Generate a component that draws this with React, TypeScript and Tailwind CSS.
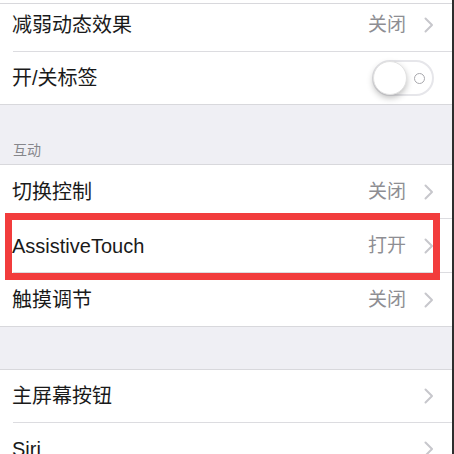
import React from "react";

const FONT = { fontFamily: '"Liberation Sans", "Noto Sans CJK SC", sans-serif' };

function Chevron() {
  return (
    <svg width="10" height="16" viewBox="0 0 10 16" className="shrink-0">
      <path d="M1.5 1.5 L8 8 L1.5 14.5" fill="none" stroke="#c7c7cc" strokeWidth="2" strokeLinecap="round" strokeLinejoin="round" />
    </svg>
  );
}

function Row({ label, value, h = "h-[53px]", extra = "" }: { label: string; value?: string; h?: string; extra?: string }) {
  return (
    <div className={`flex items-center bg-white pl-[12px] pr-[18px] ${h} ${extra}`}>
      <span className="flex-1 text-[20px] text-[#1a1a1a] leading-none">{label}</span>
      {value && <span className="text-[19px] text-[#8e8e93] leading-none mr-[18px]">{value}</span>}
      <Chevron />
    </div>
  );
}

function Sep() {
  return (
    <div className="bg-white h-px">
      <div className="ml-[13px] h-px bg-[#dcdce0]" />
    </div>
  );
}

function Line() {
  return <div className="h-px bg-[#d8d8dc]" />;
}

function Toggle() {
  return (
    <div className="relative w-[62px] h-[36px] rounded-full border-2 border-[#e6e6ea] bg-white">
      <div className="absolute left-[-1px] top-[-1px] w-[34px] h-[34px] rounded-full bg-white shadow-[0_3px_6px_rgba(0,0,0,0.25)] border border-[#e2e2e2]" />
      <div className="absolute right-[7px] top-[11px] w-[11px] h-[11px] rounded-full border-[1.5px] border-[#a8a8ad]" />
    </div>
  );
}

export default function App() {
  return (
    <div className="relative w-[454px] h-[454px] overflow-hidden bg-[#efeff4] border-r-2 border-[#2e2e2e]" style={FONT}>
      <div className="h-[3px] bg-white" />
      <Line />
      <Row label="减弱动态效果" value="关闭" h="h-[47px] pb-[6px]" />
      <Sep />
      <div className="flex items-center bg-white pl-[12px] pr-[18px] h-[52px]">
        <span className="flex-1 text-[20px] text-[#1a1a1a] leading-none">开/关标签</span>
        <Toggle />
      </div>
      <Line />
      <div className="h-[59px] flex items-end pl-[13px] pb-[4px]">
        <span className="text-[14px] leading-[20px] text-[#86868b]">互动</span>
      </div>
      <Line />
      <Row label="切换控制" value="关闭" />
      <Sep />
      <Row label="AssistiveTouch" value="打开" />
      <Sep />
      <Row label="触摸调节" value="关闭" />
      <Line />
      <div className="h-[42px]" />
      <Line />
      <Row label="主屏幕按钮" h="h-[52px]" />
      <Sep />
      <Row label="Siri" h="h-[52px]" />
      <div className="absolute left-[5px] top-[213px] w-[435px] h-[67px] border-[7px] border-[#f23c3c]" />
    </div>
  );
}
